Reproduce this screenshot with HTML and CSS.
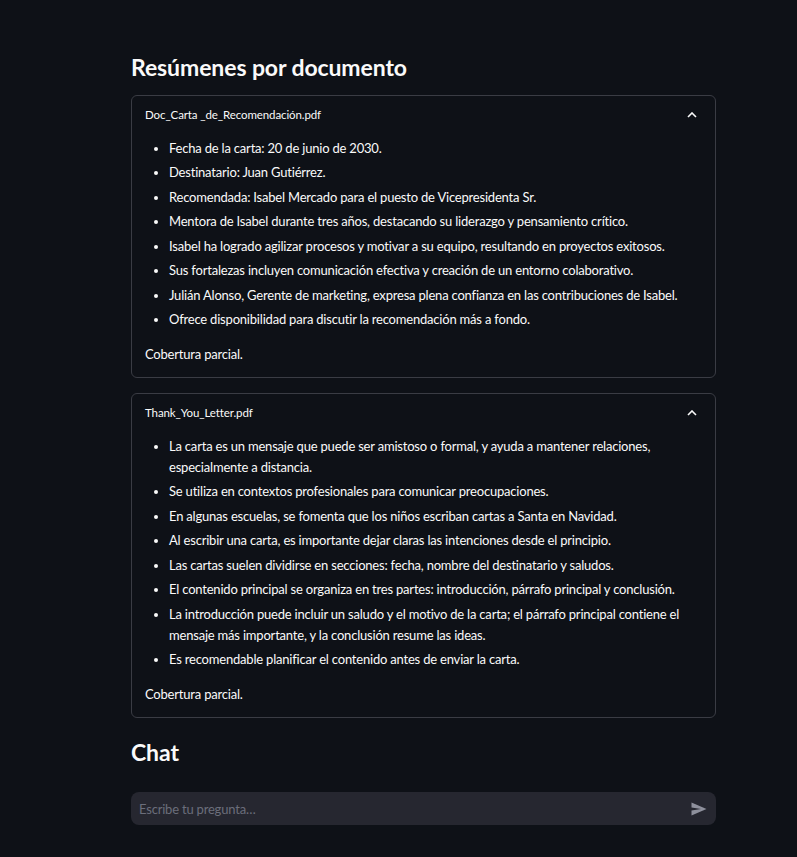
FILE: index.html
```html
<!DOCTYPE html>
<html lang="es">
<head>
<meta charset="utf-8">
<link rel="stylesheet" href="styles.css">
</head>
<body>
<main class="main">
  <h2 class="title">Resúmenes por documento</h2>

  <section class="card">
    <div class="card-head">
      <span class="card-label">Doc_Carta _de_Recomendación.pdf</span>
      <svg class="chev" width="10" height="6" viewBox="0 0 10 6"><path d="M1 5 L5 1 L9 5" fill="none" stroke="#fafafa" stroke-width="1.6"/></svg>
    </div>
    <div class="card-body">
      <ul class="list">
        <li>Fecha de la carta: 20 de junio de 2030.</li>
        <li>Destinatario: Juan Gutiérrez.</li>
        <li>Recomendada: Isabel Mercado para el puesto de Vicepresidenta Sr.</li>
        <li>Mentora de Isabel durante tres años, destacando su liderazgo y pensamiento crítico.</li>
        <li>Isabel ha logrado agilizar procesos y motivar a su equipo, resultando en proyectos exitosos.</li>
        <li>Sus fortalezas incluyen comunicación efectiva y creación de un entorno colaborativo.</li>
        <li>Julián Alonso, Gerente de marketing, expresa plena confianza en las contribuciones de Isabel.</li>
        <li>Ofrece disponibilidad para discutir la recomendación más a fondo.</li>
      </ul>
      <p class="note">Cobertura parcial.</p>
    </div>
  </section>

  <section class="card">
    <div class="card-head">
      <span class="card-label">Thank_You_Letter.pdf</span>
      <svg class="chev" width="10" height="6" viewBox="0 0 10 6"><path d="M1 5 L5 1 L9 5" fill="none" stroke="#fafafa" stroke-width="1.6"/></svg>
    </div>
    <div class="card-body">
      <ul class="list">
        <li>La carta es un mensaje que puede ser amistoso o formal, y ayuda a mantener relaciones, especialmente a distancia.</li>
        <li>Se utiliza en contextos profesionales para comunicar preocupaciones.</li>
        <li>En algunas escuelas, se fomenta que los niños escriban cartas a Santa en Navidad.</li>
        <li>Al escribir una carta, es importante dejar claras las intenciones desde el principio.</li>
        <li>Las cartas suelen dividirse en secciones: fecha, nombre del destinatario y saludos.</li>
        <li>El contenido principal se organiza en tres partes: introducción, párrafo principal y conclusión.</li>
        <li>La introducción puede incluir un saludo y el motivo de la carta; el párrafo principal contiene el mensaje más importante, y la conclusión resume las ideas.</li>
        <li>Es recomendable planificar el contenido antes de enviar la carta.</li>
      </ul>
      <p class="note">Cobertura parcial.</p>
    </div>
  </section>

  <h2 class="title chat-title">Chat</h2>

  <div class="chat-input">
    <span class="placeholder">Escribe tu pregunta…</span>
    <svg class="send" width="16" height="14" viewBox="0 0 16 14"><path d="M0.5 0.5 L15.5 7 L0.5 13.5 L0.5 8.6 L10 7 L0.5 5.4 Z" fill="#8e909c"/></svg>
  </div>
</main>
</body>
</html>
```

FILE: styles.css
```css
html, body {
  margin: 0;
  padding: 0;
  background: #0e1117;
  color: #fafafa;
  font-family: "Lato", "Noto Sans", sans-serif;
}
.main {
  width: 585px;
  padding: 51px 0 0 131px;
}
.title {
  margin: 0 0 12px;
  font-size: 23px;
  line-height: 32px;
  font-weight: 700;
  letter-spacing: -0.1px;
}
.chat-title {
  margin: 18px 0 24px;
}
.card {
  border: 1px solid #3a3c44;
  border-radius: 6px;
  padding: 0 13px;
  margin-bottom: 15px;
}
.card-head {
  height: 37px;
  display: flex;
  align-items: center;
  justify-content: space-between;
}
.card-label {
  font-size: 11.5px;
  letter-spacing: -0.1px;
}
.chev {
  margin-right: 5px;
}
.card-body {
  padding: 4.5px 0 12.5px;
  font-size: 13px;
  letter-spacing: -0.2px;
  line-height: 21px;
}
.list {
  margin: 0;
  padding-left: 24px;
}
.list li {
  margin-bottom: 3.5px;
}
.list li::marker {
  font-size: 12px;
}
.note {
  margin: 13.5px 0 0;
}
.chat-input {
  height: 33px;
  background: #262730;
  border-radius: 8px;
  display: flex;
  align-items: center;
  justify-content: space-between;
  padding: 0 8px 0 8px;
}
.placeholder {
  color: #6b6e7b;
  font-size: 13px;
  letter-spacing: -0.2px;
}
.send {
  margin-right: 1px;
}
```
